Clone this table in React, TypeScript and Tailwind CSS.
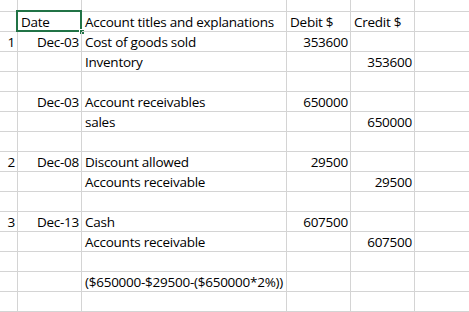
import React from "react";

type Row = [string, string, string, string, string];

const rows: Row[] = [
  ["", "", "", "", ""],
  ["", "Date", "Account titles and explanations", "Debit $", "Credit $"],
  ["1", "Dec-03", "Cost of goods sold", "353600", ""],
  ["", "", "Inventory", "", "353600"],
  ["", "", "", "", ""],
  ["", "Dec-03", "Account receivables", "650000", ""],
  ["", "", "sales", "", "650000"],
  ["", "", "", "", ""],
  ["2", "Dec-08", "Discount allowed", "29500", ""],
  ["", "", "Accounts receivable", "", "29500"],
  ["", "", "", "", ""],
  ["3", "Dec-13", "Cash", "607500", ""],
  ["", "", "Accounts receivable", "", "607500"],
  ["", "", "", "", ""],
  ["", "", "($650000-$29500-($650000*2%))", "", ""],
  ["", "", "", "", ""],
];

const widths = ["w-[18px]", "w-[64px]", "w-[205px]", "w-[64px]", "w-[64px]"];

export default function App() {
  return (
    <div
      className="w-[469px] h-[312px] bg-white overflow-hidden text-black text-[13.5px] tracking-[-0.25px]"
      style={{ fontFamily: '"Open Sans", "Liberation Sans", Arial, sans-serif' }}
    >
      {rows.map((r, ri) => {
        const header = ri === 1;
        return (
          <div
            key={ri}
            className={`flex ${ri === 0 ? "h-[12px]" : "h-[20px]"}`}
          >
            {r.map((txt, ci) => {
              const leftAlign = ci === 2 || (header && (ci === 1 || ci === 3 || ci === 4));
              return (
                <div
                  key={ci}
                  className={`${widths[ci]} shrink-0 h-full border-r border-b border-[#d4d4d4] relative whitespace-nowrap leading-[19px] ${
                    leftAlign ? "pl-[3px] text-left" : "pr-[2px] text-right"
                  }`}
                >
                  <div className="pt-[1px]">{txt}</div>
                  {header && ci === 1 && (
                    <div className="absolute left-[-2px] top-[-2px] w-[66px] h-[22px] border-2 border-[#217346] pointer-events-none">
                      <div className="absolute left-[61px] top-[17px] w-[6px] h-[6px] bg-[#217346] border border-white" />
                    </div>
                  )}
                </div>
              );
            })}
            <div className="flex-1 h-full border-b border-[#d4d4d4]" />
          </div>
        );
      })}
    </div>
  );
}
